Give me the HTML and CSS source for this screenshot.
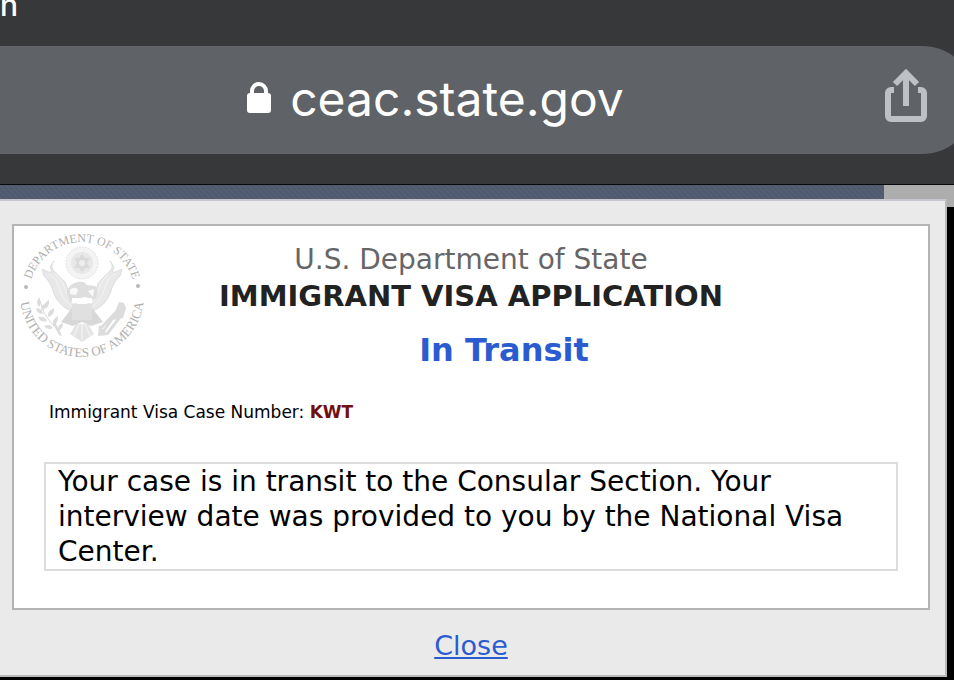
FILE: index.html
```
<!DOCTYPE html>
<html lang="en">
  <head>
    <meta charset="UTF-8" />
    <meta name="viewport" content="width=device-width, initial-scale=1.0" />
    <title>Immigrant Visa Application Status</title>
    <link rel="stylesheet" href="styles.css">
  </head>

  <body>
    <header class="browser">
      <div class="browser-status">n</div>
      <div class="address-bar">
        <button class="address" type="button">
          <svg class="lock" width="26" height="32" viewBox="0 0 26 32" aria-hidden="true">
            <path d="M6 13V9a7 7 0 0 1 14 0v4" fill="none" stroke="#fff" stroke-width="4" />
            <rect x="1" y="11" width="24" height="20" rx="3" fill="#fff" />
          </svg>
          <span>ceac.state.gov</span>
        </button>
        <button class="share" type="button" aria-label="Share">
          <svg width="44" height="56" viewBox="0 0 44 56" fill="none" stroke="#bdc1c6" stroke-width="6" aria-hidden="true">
            <path d="M10 22H7a3 3 0 0 0-3 3v23a3 3 0 0 0 3 3h30a3 3 0 0 0 3-3V25a3 3 0 0 0-3-3h-3" />
            <path d="M22 38V6M11 16L22 5l11 11" />
          </svg>
        </button>
      </div>
    </header>

    <div class="page-strip">
      <div class="page-banner"></div>
      <div class="page-margin"></div>
    </div>

    <main class="dialog">
      <section class="card">
        <div class="heading">
          <svg class="seal" width="126" height="126" viewBox="0 0 126 126" role="img" aria-label="Department of State seal">
            <defs>
              <path id="arc-top" d="M10 63a53 53 0 0 1 106 0" />
              <path id="arc-bottom" d="M1 63a62 62 0 0 0 124 0" />
            </defs>
            <g class="seal-text">
              <text font-size="12" text-anchor="middle"><textPath href="#arc-top" startOffset="50%">DEPARTMENT OF STATE</textPath></text>
              <text font-size="13" text-anchor="middle"><textPath href="#arc-bottom" startOffset="50%">UNITED STATES OF AMERICA</textPath></text>
            </g>
            <circle cx="7" cy="55" r="2" fill="#b8b8b8" />
            <circle cx="119" cy="54" r="2" fill="#b8b8b8" />
            <!-- glory -->
            <circle cx="63" cy="31" r="16" fill="#f4f4f4" stroke="#e2e2e2" stroke-dasharray="2 1" />
            <circle cx="63" cy="31" r="11" fill="#e8e8e8" />
            <path d="M63 22l3 4 5 0-3 5 3 5-5 0-3 4-3-4-5 0 3-5-3-5 5 0z" fill="#dadada" />
            <circle cx="63" cy="31" r="3" fill="#eee" />
            <!-- wings -->
            <g fill="#e8e8e8" stroke="#dedede">
              <path d="M35 29c-4 5-2 9 3 13l8 8c3 5 3 15 11 21l-2 9c-10-3-18-11-21-21-2-7-5-11-9-15l-2-7 6 3 4 0-2-5z" />
              <path d="M91 29c4 5 2 9-3 13l-8 8c-3 5-3 15-11 21l2 9c10-3 18-11 21-21 2-7 5-11 9-15l2-7-6 3-4 0 2-5z" />
            </g>
            <path d="M30 42c8 5 9 10 12 19 3 7 6 10 12 14M36 42c8 6 9 13 12 20 2 5 4 7 7 10M96 42c-8 5-9 10-12 19-3 7-6 10-12 14M90 42c-8 6-9 13-12 20-2 5-4 7-7 10" fill="none" stroke="#f5f5f5" />
            <!-- head and scroll -->
            <path d="M48 62c0-7 5-11 11-12 4-1 7 0 9 3l8 1c4 4 3 10-1 14l-9-3-9 2-6 3z" fill="#dedede" />
            <path d="M51 58c3-3 6-3 8 0l-2 5-6-1zM69 59l6-2-1 8z" fill="#fafafa" />
            <!-- shield and tail -->
            <path d="M53 76l-11 14 12 4 9-4 9 4 12-4-11-14z" fill="#d8d8d8" />
            <path d="M53 72h20v16H53z" fill="#e0e0e0" />
            <path d="M53 66h20v5H53z" fill="#fff" />
            <path d="M57 92h12l6 10-12 8-12-8z" fill="#e4e4e4" />
            <path d="M63 92v16M60 92l-5 12M66 92l5 12" stroke="#f7f7f7" fill="none" />
            <!-- olive branch -->
            <path d="M20 66l5 15 8 11 9 9" fill="none" stroke="#d8d8d8" />
            <g fill="#dcdcdc">
              <path d="M20 66q-4 4 0 9 3-4 0-9zM17 76q1 6 7 6-1-6-7-6zM30 68q-6 3-5 9 6-2 5-9zM19 85q3 6 9 4-2-5-9-4zM35 76q-7 3-6 9 7-2 6-9zM25 94q4 5 9 2-3-5-9-2zM39 84q-6 3-5 9 6-2 5-9zM44 91q-6 2-5 8 5-2 5-8zM25 72q-4 3-2 7 4-3 2-7z" />
              <path d="M36 90l7 14-3-1-6-11z" />
            </g>
            <!-- arrows -->
            <path d="M84 100l19-27M81 97l19-20M88 102l16-21" fill="none" stroke="#dcdcdc" stroke-width="3" />
            <path d="M100 70l5 1 2 5-3 10-11 2zM80 93l9 10-10 1z" fill="#dcdcdc" />
          </svg>
          <div class="department">U.S. Department of State</div>
          <h1>IMMIGRANT VISA APPLICATION</h1>
          <h2>In Transit</h2>
        </div>
        <p class="case-number">Immigrant Visa Case Number: <strong>KWT</strong></p>
        <p class="message">Your case is in transit to the Consular Section. Your interview date was provided to you by the National Visa Center.</p>
      </section>
      <a class="close" href="#">Close</a>
    </main>
  </body>
</html>
```
FILE: styles.css
```
* {
  box-sizing: border-box;
}

body {
  margin: 0;
  overflow-x: hidden;
  background-color: #000;
  font-family: Verdana, "DejaVu Sans", sans-serif;
}

button {
  padding: 0;
  border: 0;
  background: none;
  cursor: pointer;
}

/* browser chrome */
.browser {
  padding-bottom: 30px;
  border-bottom: 1px solid #08090a;
  background-color: #363839;
  color: #fff;
  font-family: Inter, sans-serif;
}

.browser-status {
  height: 46px;
  font-size: 30px;
  font-weight: 500;
  line-height: 10px;
}

.address-bar {
  display: flex;
  height: 108px;
  margin-right: -22px;
  border-radius: 0 54px 54px 0;
  background-color: #5f6266;
}

.address {
  display: flex;
  flex: 1;
  align-items: center;
  justify-content: center;
  gap: 18px;
  padding-bottom: 4px;
  color: #fff;
  font-family: inherit;
  font-size: 48px;
}

.share {
  width: 106px;
  padding: 0 0 8px 14px;
  text-align: left;
}

.share svg {
  vertical-align: middle;
}

/* page behind the dialog */
.page-strip {
  display: flex;
  height: 22px;
}

.page-banner {
  flex: 1;
  background: repeating-linear-gradient(45deg, #505a6e 0 2px, #545e73 2px 4px);
}

.page-margin {
  width: 70px;
  background-color: #adadad;
}

/* status dialog */
.dialog {
  position: relative;
  margin: -8px 7px 0 0;
  padding: 23px 15px 11px 12px;
  border: 2px solid #b9b9b9;
  border-top-color: #c9c5cf;
  border-left: 0;
  background-color: #eaeaea;
  text-align: center;
}

.card {
  padding: 0 30px 37px;
  border: 2px solid #b4b4b4;
  background-color: #fff;
}

.heading {
  position: relative;
  padding-top: 16px;
}

.seal {
  position: absolute;
  top: 6px;
  left: -25px;
  overflow: visible;
}

.seal-text {
  fill: #b0b0b0;
  font-family: "Liberation Serif", serif;
}

.department {
  color: #666;
  font-size: 28px;
  line-height: 36px;
}

h1 {
  margin: 0;
  color: #222;
  font-size: 29px;
  line-height: 36px;
}

h2 {
  margin: 18px 0 0;
  padding-left: 66px;
  color: #2a5bd0;
  font-size: 32px;
  line-height: 36px;
}

.case-number {
  margin: 32px 0 38px 5px;
  font-size: 17px;
  line-height: 24px;
  text-align: left;
}

.case-number strong {
  color: #701010;
}

.message {
  margin: 0;
  padding: 0 12px;
  border: 2px solid #dcdcdc;
  font-size: 28px;
  line-height: 35px;
  text-align: left;
}

.close {
  display: block;
  width: fit-content;
  margin: 18px auto 0;
  color: #2a5bd0;
  font-size: 27px;
  line-height: 36px;
}
```
